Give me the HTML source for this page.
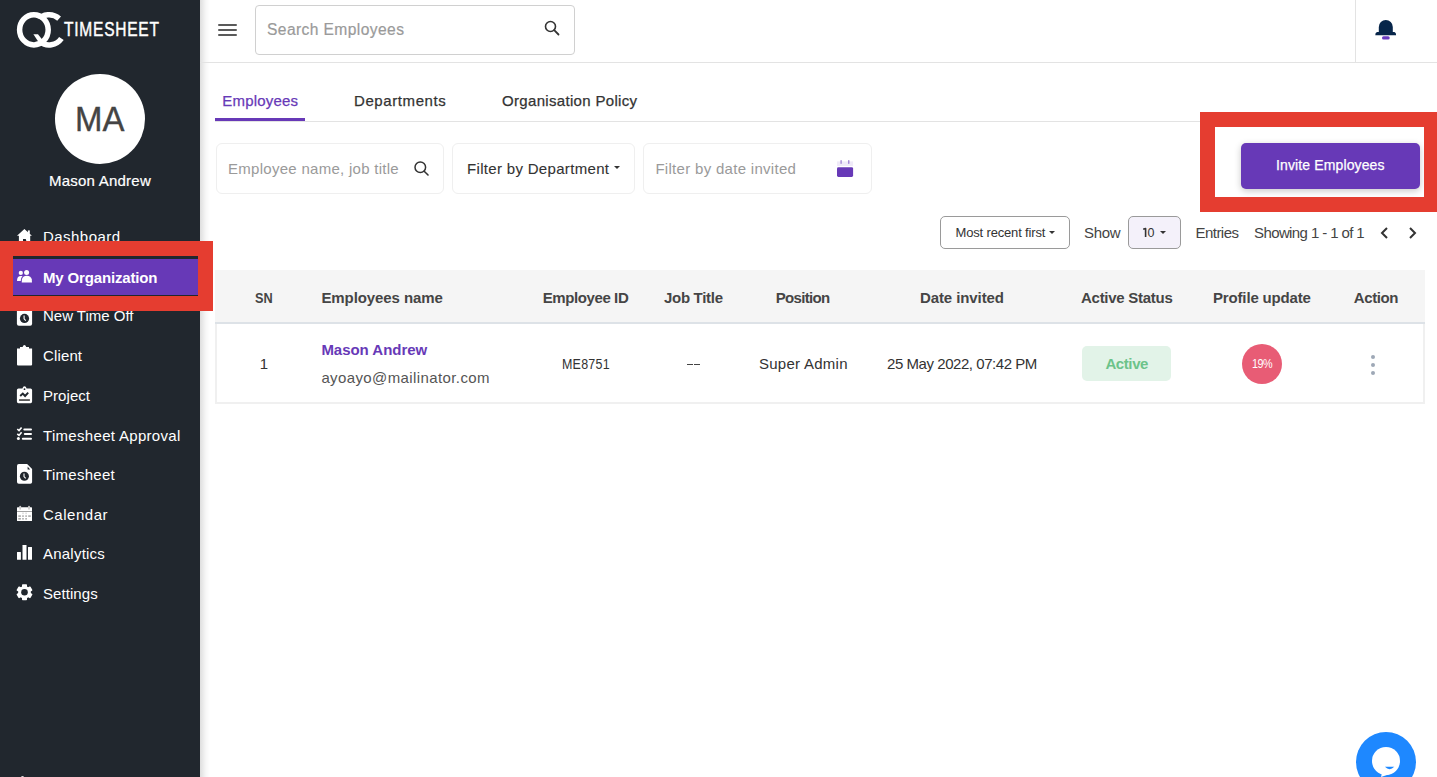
<!DOCTYPE html>
<html><head><meta charset="utf-8"><style>
html,body{margin:0;padding:0;width:1437px;height:777px;overflow:hidden;background:#fff;position:relative;}
body{font-family:"Liberation Sans",sans-serif;}
.t{position:absolute;white-space:nowrap;line-height:1;}
</style></head><body>
<div style="position:absolute;left:0;top:0;width:200px;height:777px;background:#21272e;"></div>
<div style="position:absolute;left:200px;top:0;width:10px;height:777px;background:linear-gradient(to right,rgba(0,0,0,0.13),rgba(0,0,0,0.03) 60%,rgba(0,0,0,0));"></div>
<svg style="position:absolute;left:0;top:0" width="200" height="60" viewBox="0 0 200 60">
<path d="M 59.1 18.6 A 15.1 15.1 0 1 0 61.4 38.5" fill="none" stroke="#fff" stroke-width="5.6"/>
<circle cx="33.9" cy="29.8" r="12.2" fill="#21272e"/>
<ellipse cx="33.9" cy="29.8" rx="14.3" ry="15.1" fill="none" stroke="#fff" stroke-width="5.5"/>
<path d="M33.4 34.2 L38 34.2 L43.5 41.2 L39.5 43.6 Z" fill="#fff"/>
</svg>
<div class="t" style="left:64.00px;top:19.57px;font-size:19.4px;font-weight:400;color:#ffffff;letter-spacing:0.961px;-webkit-text-stroke:0.45px currentColor;transform:scaleX(0.8);transform-origin:0.00px 0;">TIMESHEET</div>
<div style="position:absolute;left:55px;top:74px;width:90px;height:90px;border-radius:50%;background:#fff;"></div>
<div class="t" style="left:75.00px;top:101.17px;font-size:35px;font-weight:400;color:#444;letter-spacing:0.197px;-webkit-text-stroke:0.35px currentColor;transform:scaleX(0.94);transform-origin:0.00px 0;">MA</div>
<div class="t" style="left:49.00px;top:173.30px;font-size:15px;font-weight:400;color:#ffffff;letter-spacing:0.227px;-webkit-text-stroke:0.2px currentColor;">Mason Andrew</div>
<div style="position:absolute;left:0;top:259px;width:200px;height:36px;background:#6739b7;"></div>
<div class="t" style="left:43.00px;top:229.30px;font-size:15px;font-weight:400;color:#ffffff;letter-spacing:0.456px;">Dashboard</div>
<div class="t" style="left:43.00px;top:269.70px;font-size:15px;font-weight:700;color:#ffffff;letter-spacing:-0.157px;">My Organization</div>
<div class="t" style="left:43.00px;top:308.30px;font-size:15px;font-weight:400;color:#ffffff;letter-spacing:-0.009px;">New Time Off</div>
<div class="t" style="left:43.00px;top:348.30px;font-size:15px;font-weight:400;color:#ffffff;letter-spacing:0.135px;">Client</div>
<div class="t" style="left:43.00px;top:387.60px;font-size:15px;font-weight:400;color:#ffffff;letter-spacing:0.058px;">Project</div>
<div class="t" style="left:43.00px;top:427.60px;font-size:15px;font-weight:400;color:#ffffff;letter-spacing:0.312px;">Timesheet Approval</div>
<div class="t" style="left:43.00px;top:466.70px;font-size:15px;font-weight:400;color:#ffffff;letter-spacing:0.281px;">Timesheet</div>
<div class="t" style="left:43.00px;top:506.60px;font-size:15px;font-weight:400;color:#ffffff;letter-spacing:0.529px;">Calendar</div>
<div class="t" style="left:43.00px;top:545.90px;font-size:15px;font-weight:400;color:#ffffff;letter-spacing:0.225px;">Analytics</div>
<div class="t" style="left:43.00px;top:585.60px;font-size:15px;font-weight:400;color:#ffffff;letter-spacing:0.068px;">Settings</div>
<svg style="position:absolute;left:0;top:0" width="200" height="777" viewBox="0 0 200 777">
<g fill="#fff">
<!-- home -->
<path d="M24.4 229 L31.9 235.7 L30.2 235.7 L30.2 242 L18.9 242 L18.9 235.7 L17 235.7 Z"/>
<rect x="27.9" y="230.4" width="1.9" height="3.5"/>
<!-- users -->
<circle cx="26.6" cy="272.4" r="2.5"/>
<circle cx="20.8" cy="272.9" r="2.1"/>
<path d="M21.7 282.5 L21.9 279.5 C22.3 277.3 24 275.8 26.8 275.8 C29.6 275.8 31.4 277.3 31.8 279.5 L32 282.5 Z"/>
<path d="M17 281 L17.2 279 C17.6 277.2 18.8 276 20.6 276 L22.6 276 C21.4 277.2 20.8 279 20.8 281 Z"/>
<!-- new time off -->
<rect x="16.9" y="305" width="15.2" height="20.8" rx="2"/>
<!-- client -->
<path d="M17 348.4 L20 348.4 L20 347 L22.6 347 Q23.2 345 24.4 345 Q25.6 345 26.2 347 L29 347 L29 348.4 L32.1 348.4 L32.1 364.4 Q32.1 365.4 31.1 365.4 L18 365.4 Q17 365.4 17 364.4 Z"/>
<!-- project -->
<path d="M16.9 390 Q16.9 388.4 18.5 388.4 L22.4 388.4 Q23 386.2 24.5 386.2 Q26 386.2 26.6 388.4 L30.5 388.4 Q32.1 388.4 32.1 390 L32.1 401.6 Q32.1 403.2 30.5 403.2 L18.5 403.2 Q16.9 403.2 16.9 401.6 Z"/>
<!-- approval -->
<path d="M17.3 429 L19 430.6 L21.6 427.4" fill="none" stroke="#fff" stroke-width="1.6"/>
<path d="M17.3 433.8 L19 435.4 L21.6 432.2" fill="none" stroke="#fff" stroke-width="1.6"/>
<circle cx="18.4" cy="438.6" r="1.5"/>
<rect x="23.3" y="428.4" width="8.7" height="2" rx="1"/>
<rect x="23.8" y="433" width="8.2" height="2" rx="1"/>
<rect x="21.8" y="437.7" width="10.2" height="2" rx="1"/>
<!-- timesheet -->
<path d="M17 465.8 Q17 464 18.8 464 L27.1 464 L32.1 469 L32.1 482 Q32.1 483.8 30.3 483.8 L18.8 483.8 Q17 483.8 17 482 Z"/>
<!-- calendar -->
<rect x="17" y="507.2" width="15" height="13.8" rx="0.6"/>
<!-- analytics -->
<rect x="17" y="551.9" width="3.9" height="7.9" rx="0.4"/>
<rect x="22.5" y="545" width="4" height="14.8" rx="0.4"/>
<rect x="28" y="546.9" width="4" height="12.9" rx="0.4"/>
<!-- settings -->
<g transform="translate(24.5 592.3)">
<circle r="6.3"/>
<rect x="-2.5" y="-8" width="5" height="16" rx="0.8"/>
<rect x="-2.5" y="-8" width="5" height="16" rx="0.8" transform="rotate(60)"/>
<rect x="-2.5" y="-8" width="5" height="16" rx="0.8" transform="rotate(-60)"/>
</g>
</g>
<g fill="#21272e">
<circle cx="24.5" cy="318.4" r="4.6"/>
<circle cx="24.4" cy="476.2" r="4.5"/>
<path d="M27.6 466.5 L30.2 469.6 L27.6 469.6 Z"/>
<circle cx="24.5" cy="592.3" r="3.3"/>
<rect x="24.6" y="240" width="1.6" height="2" />
<rect x="23" y="239" width="2.9" height="3"/>
<circle cx="24.5" cy="389.2" r="0.9"/>
<path d="M20.2 396 L22.8 393.5 L25.1 396 L28.2 392.6" fill="none" stroke="#21272e" stroke-width="1.9"/>
<rect x="19.1" y="399.2" width="10.8" height="1.7" fill="#4a4a4a"/>
<rect x="17" y="511" width="15" height="0.9" fill="#999"/>
</g>
<g fill="#fff">
<path d="M24.1 315.6 L24.1 318.8 L25.8 320.6" fill="none" stroke="#fff" stroke-width="1.1"/>
<path d="M24 473.4 L24 476.6 L25.7 478.4" fill="none" stroke="#fff" stroke-width="1.1"/>
</g>
<g fill="#aaa">
<rect x="19.3" y="505.7" width="1.8" height="4" rx="0.9" fill="#ccc"/>
<rect x="28.1" y="505.7" width="1.8" height="4" rx="0.9" fill="#ccc"/>
<rect x="18.3" y="515.3" width="2.6" height="1.6"/><rect x="22.2" y="515.3" width="1.6" height="1.6"/><rect x="25.3" y="515.3" width="1.6" height="1.6"/><rect x="28.2" y="515.3" width="2.6" height="1.6"/>
<rect x="18.3" y="518" width="2.6" height="1.6"/><rect x="22.2" y="518" width="1.6" height="1.6"/><rect x="25.3" y="518" width="1.6" height="1.6"/>
<rect x="22.2" y="512.5" width="1.6" height="1.6" fill="#ddd"/><rect x="25.3" y="512.5" width="1.6" height="1.6" fill="#ddd"/>
</g>
</svg>
<div style="position:absolute;left:200px;top:62px;width:1237px;height:1px;background:#e3e3e3;"></div>
<div style="position:absolute;left:1355px;top:0;width:1px;height:62px;background:#e3e3e3;"></div>
<div style="position:absolute;left:218px;top:24px;width:19px;height:2px;border-radius:1px;background:#5a5a5a;"></div>
<div style="position:absolute;left:218px;top:29px;width:19px;height:2px;border-radius:1px;background:#5a5a5a;"></div>
<div style="position:absolute;left:218px;top:34px;width:19px;height:2px;border-radius:1px;background:#5a5a5a;"></div>
<div style="position:absolute;left:255px;top:5px;width:318px;height:48px;border:1px solid #d0d0d0;border-radius:4px;"></div>
<div class="t" style="left:267.00px;top:22.49px;font-size:15.6px;font-weight:400;color:#9a9a9a;letter-spacing:0.403px;-webkit-text-stroke:0.2px currentColor;">Search Employees</div>
<svg style="position:absolute;left:544px;top:19.5px" width="16" height="16" viewBox="0 0 16 16">
<circle cx="6.5" cy="6.5" r="5" fill="none" stroke="#333" stroke-width="1.6"/><path d="M10.2 10.2 L14.5 14.5" stroke="#333" stroke-width="1.8" stroke-linecap="round"/></svg>
<svg style="position:absolute;left:1374px;top:19px" width="24" height="22" viewBox="0 0 24 22">
<path d="M4.8 12.9 L4.8 7.9 A7 7 0 0 1 18.8 7.9 L18.8 12.9 L20.3 12.9 Q21.2 13 21.8 14.2 L22.1 16.2 L1.3 16.2 L1.6 14.2 Q2.2 13 3.3 12.9 Z" fill="#07264a"/>
<rect x="8" y="17.3" width="7.7" height="3.1" rx="1.5" fill="#6a3bc0"/></svg>
<div class="t" style="left:222.30px;top:92.70px;font-size:15px;font-weight:400;color:#6739b7;letter-spacing:0.178px;-webkit-text-stroke:0.25px currentColor;">Employees</div>
<div class="t" style="left:354.00px;top:92.70px;font-size:15px;font-weight:400;color:#333;letter-spacing:0.593px;-webkit-text-stroke:0.25px currentColor;">Departments</div>
<div class="t" style="left:502.00px;top:92.70px;font-size:15px;font-weight:400;color:#333;letter-spacing:0.321px;-webkit-text-stroke:0.25px currentColor;">Organisation Policy</div>
<div style="position:absolute;left:215px;top:121px;width:1222px;height:1px;background:#e3e3e3;"></div>
<div style="position:absolute;left:215px;top:118px;width:90px;height:3px;background:#6739b7;"></div>
<div style="position:absolute;left:216px;top:143px;width:226px;height:49px;border:1px solid #efefef;border-radius:6px;background:#fff;"></div>
<div class="t" style="left:228.00px;top:160.90px;font-size:15px;font-weight:400;color:#9a9a9a;letter-spacing:0.280px;">Employee name, job title</div>
<svg style="position:absolute;left:414px;top:161px" width="15" height="15" viewBox="0 0 15 15">
<circle cx="6.3" cy="6.3" r="5.3" fill="none" stroke="#333" stroke-width="1.5"/><path d="M10.2 10.2 L14 14" stroke="#333" stroke-width="1.6" stroke-linecap="round"/></svg>
<div style="position:absolute;left:452px;top:143px;width:181px;height:49px;border:1px solid #efefef;border-radius:6px;background:#fff;"></div>
<div class="t" style="left:467.00px;top:160.90px;font-size:15px;font-weight:400;color:#333;letter-spacing:0.321px;-webkit-text-stroke:0.1px currentColor;">Filter by Department</div>
<div style="position:absolute;left:614.2px;top:165.8px;width:0;height:0;border-left:3.3px solid transparent;border-right:3.3px solid transparent;border-top:3.5px solid #333;"></div>
<div style="position:absolute;left:643px;top:143px;width:227px;height:49px;border:1px solid #efefef;border-radius:6px;background:#fff;"></div>
<div class="t" style="left:655.40px;top:160.90px;font-size:15px;font-weight:400;color:#9a9a9a;letter-spacing:0.302px;">Filter by date invited</div>
<svg style="position:absolute;left:836px;top:159px" width="18" height="19" viewBox="0 0 18 19">
<rect x="1" y="2.4" width="16.1" height="4.6" fill="#efeaf8"/>
<rect x="4.4" y="1" width="1.4" height="4" rx="0.7" fill="#a48ad6"/><rect x="12" y="1" width="1.5" height="4" rx="0.7" fill="#a48ad6"/>
<rect x="1" y="8.2" width="16.1" height="9.8" rx="1.4" fill="#6739b7"/></svg>
<div style="position:absolute;left:1241px;top:143px;width:179px;height:46px;border-radius:5px;background:#6739b7;box-shadow:0 2px 7px rgba(0,0,0,0.22);"></div>
<div class="t" style="left:1276.00px;top:158.15px;font-size:14px;font-weight:400;color:#ffffff;letter-spacing:0.126px;-webkit-text-stroke:0.25px currentColor;">Invite Employees</div>
<div style="position:absolute;left:1200px;top:112px;width:209px;height:70px;border:15px solid #e53d30;border-right-width:13px;"></div>
<div style="position:absolute;left:0px;top:241px;width:185px;height:40px;border:15px solid #e53d30;border-left-width:13px;"></div>
<div style="position:absolute;left:940px;top:216px;width:128px;height:31px;border:1px solid #9a9a9a;border-radius:5px;background:#fff;"></div>
<div class="t" style="left:955.50px;top:226.39px;font-size:13px;font-weight:400;color:#333;letter-spacing:-0.162px;">Most recent first</div>
<div style="position:absolute;left:1049px;top:231px;width:0;height:0;border-left:3px solid transparent;border-right:3px solid transparent;border-top:3px solid #333;"></div>
<div class="t" style="left:1084.00px;top:225.30px;font-size:15px;font-weight:400;color:#444;letter-spacing:-0.292px;">Show</div>
<div style="position:absolute;left:1128px;top:216px;width:51px;height:31px;border:1px solid #9a9a9a;border-radius:5px;background:#f4f1fa;"></div>
<svg style="position:absolute;left:1139.6px;top:226.3px" width="10" height="14" viewBox="0 0 10 14"><path d="M3.2 3.3 L5.6 2.5 L5.6 11" fill="none" stroke="#333" stroke-width="1.6" stroke-linejoin="round"/></svg>
<div class="t" style="left:1147.60px;top:227.02px;font-size:12.5px;font-weight:400;color:#333;letter-spacing:0.000px;">0</div>
<div style="position:absolute;left:1160px;top:231px;width:0;height:0;border-left:3px solid transparent;border-right:3px solid transparent;border-top:3px solid #333;"></div>
<div class="t" style="left:1195.40px;top:225.30px;font-size:15px;font-weight:400;color:#444;letter-spacing:-0.508px;">Entries</div>
<div class="t" style="left:1254.00px;top:225.30px;font-size:15px;font-weight:400;color:#444;letter-spacing:-0.600px;">Showing 1 - 1 of 1</div>
<svg style="position:absolute;left:1378px;top:225px" width="44" height="16" viewBox="0 0 44 16">
<path d="M9 3 L4 8 L9 13" fill="none" stroke="#333" stroke-width="2"/><path d="M32 3 L37 8 L32 13" fill="none" stroke="#333" stroke-width="2"/></svg>
<div style="position:absolute;left:215px;top:270px;width:1210px;height:52px;background:#f5f5f5;"></div>
<div style="position:absolute;left:215px;top:322px;width:1210px;height:2px;background:#dde2e7;"></div>
<div style="position:absolute;left:215px;top:324px;width:1206px;height:77.5px;border:2px solid #f0f0f0;border-top:none;"></div>
<div class="t" style="left:254.60px;top:289.90px;font-size:15px;font-weight:700;color:#454545;letter-spacing:0.091px;transform:scaleX(0.85);transform-origin:0.00px 0;">SN</div>
<div class="t" style="left:321.40px;top:289.90px;font-size:15px;font-weight:700;color:#454545;letter-spacing:-0.081px;">Employees name</div>
<div class="t" style="left:542.70px;top:289.90px;font-size:15px;font-weight:700;color:#454545;letter-spacing:-0.400px;">Employee ID</div>
<div class="t" style="left:664.00px;top:289.90px;font-size:15px;font-weight:700;color:#454545;letter-spacing:-0.303px;">Job Title</div>
<div class="t" style="left:775.70px;top:289.90px;font-size:15px;font-weight:700;color:#454545;letter-spacing:-0.654px;">Position</div>
<div class="t" style="left:919.90px;top:289.90px;font-size:15px;font-weight:700;color:#454545;letter-spacing:-0.086px;">Date invited</div>
<div class="t" style="left:1081.00px;top:289.90px;font-size:15px;font-weight:700;color:#454545;letter-spacing:-0.269px;">Active Status</div>
<div class="t" style="left:1213.00px;top:289.90px;font-size:15px;font-weight:700;color:#454545;letter-spacing:-0.158px;">Profile update</div>
<div class="t" style="left:1353.80px;top:289.90px;font-size:15px;font-weight:700;color:#454545;letter-spacing:-0.410px;">Action</div>
<div class="t" style="left:259.80px;top:356.20px;font-size:15px;font-weight:400;color:#333;letter-spacing:0.000px;">1</div>
<div class="t" style="left:321.40px;top:342.30px;font-size:15px;font-weight:700;color:#6739b7;letter-spacing:-0.030px;">Mason Andrew</div>
<div class="t" style="left:321.40px;top:370.20px;font-size:15px;font-weight:400;color:#555;letter-spacing:0.391px;">ayoayo@mailinator.com</div>
<div class="t" style="left:561.90px;top:356.72px;font-size:14.5px;font-weight:400;color:#333;letter-spacing:0.267px;transform:scaleX(0.86);transform-origin:0.00px 0;">ME8751</div>
<div style="position:absolute;left:686.7px;top:364px;width:6px;height:1.3px;background:#444;"></div><div style="position:absolute;left:693.8px;top:364px;width:6px;height:1.3px;background:#444;"></div>
<div class="t" style="left:759.00px;top:356.10px;font-size:15px;font-weight:400;color:#333;letter-spacing:0.263px;">Super Admin</div>
<div class="t" style="left:887.00px;top:356.10px;font-size:15px;font-weight:400;color:#333;letter-spacing:-0.445px;">25 May 2022, 07:42 PM</div>
<div style="position:absolute;left:1082px;top:346px;width:89px;height:35px;border-radius:5px;background:#e2f3e8;"></div>
<div class="t" style="left:1105.40px;top:356.30px;font-size:15px;font-weight:700;color:#6cc38a;letter-spacing:-0.400px;">Active</div>
<div style="position:absolute;left:1242px;top:344px;width:40px;height:40px;border-radius:50%;background:#e85c75;"></div>
<div class="t" style="left:1252.00px;top:356.77px;font-size:13.5px;font-weight:400;color:#ffffff;letter-spacing:-0.688px;transform:scaleX(0.8);transform-origin:0.00px 0;">19%</div>
<div style="position:absolute;left:1370.5px;top:354.7px;width:4.6px;height:4.6px;border-radius:50%;background:#9ea8b6;"></div>
<div style="position:absolute;left:1370.5px;top:362.7px;width:4.6px;height:4.6px;border-radius:50%;background:#9ea8b6;"></div>
<div style="position:absolute;left:1370.5px;top:370.7px;width:4.6px;height:4.6px;border-radius:50%;background:#9ea8b6;"></div>
<svg style="position:absolute;left:1355px;top:731px" width="62" height="46" viewBox="0 0 62 46">
<circle cx="31" cy="31" r="30" fill="#1e88ff"/>
<circle cx="31" cy="30" r="14" fill="#fff"/>
<path d="M27.5 40 L26 46 L35 43 Z" fill="#fff"/>
<path d="M29.9 35.8 Q34.6 40.5 39.3 35.8 Z" fill="#1e88ff"/></svg>
<div style="position:absolute;left:21px;top:775.8px;width:3px;height:3px;border-radius:50%;background:#ddd;"></div>
</body></html>
